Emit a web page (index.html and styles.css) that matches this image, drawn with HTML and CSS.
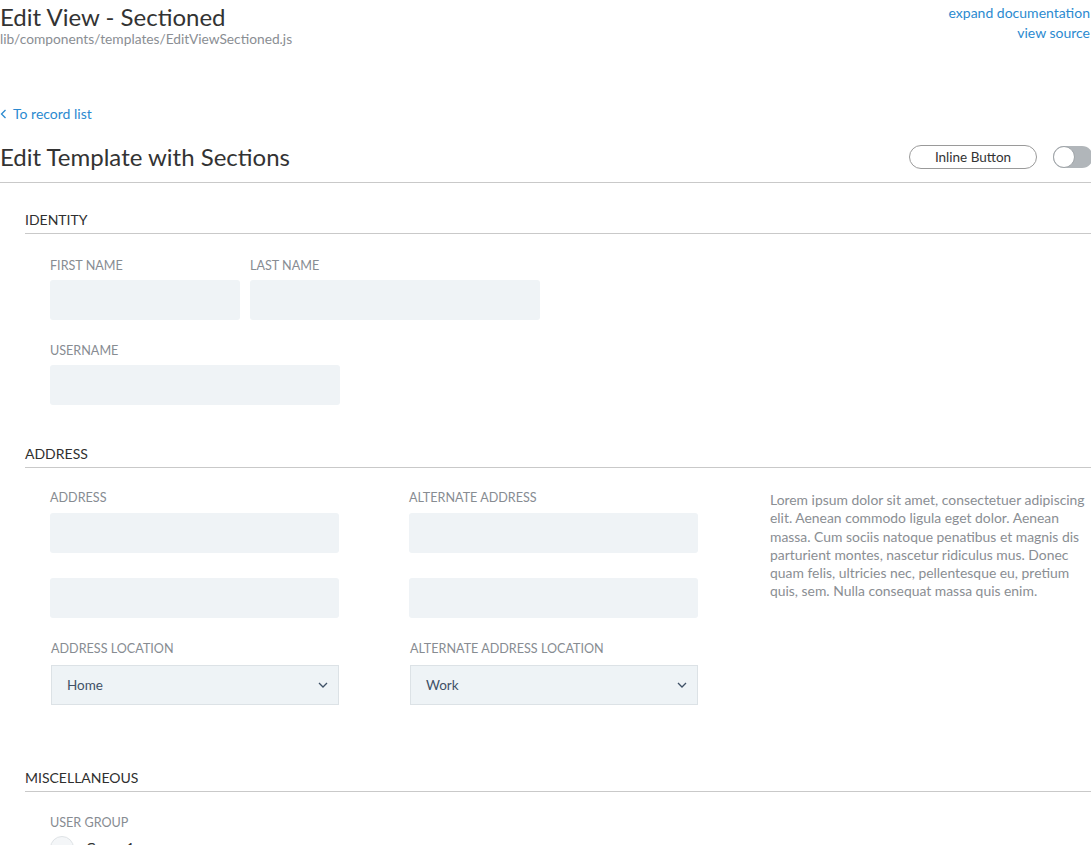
FILE: index.html
```html
<!DOCTYPE html>
<html lang="en">
<head>
<meta charset="utf-8">
<title>Edit View - Sectioned</title>
<link rel="stylesheet" href="styles.css">
</head>
<body>
<header class="doc-header">
  <div class="doc-title-block">
    <h1 class="doc-title">Edit View - Sectioned</h1>
    <div class="doc-path">lib/components/templates/EditViewSectioned.js</div>
  </div>
  <div class="doc-links">
    <a class="link" href="#">expand documentation</a>
    <a class="link" href="#">view source</a>
  </div>
</header>

<a class="back-link" href="#"><svg class="back-icon" width="7" height="10" viewBox="0 0 7 10"><path d="M5.5 1 L1.5 5 L5.5 9" fill="none" stroke="currentColor" stroke-width="1.3"/></svg>To record list</a>

<div class="page-header">
  <h2 class="page-title">Edit Template with Sections</h2>
  <div class="page-actions">
    <button class="pill-button">Inline Button</button>
    <span class="toggle"><span class="toggle-knob"></span></span>
  </div>
</div>

<section class="section section-identity">
  <h3 class="section-title">IDENTITY</h3>
  <div class="section-body">
    <div class="row">
      <div class="field w190">
        <div class="label">FIRST NAME</div>
        <div class="input"></div>
      </div>
      <div class="field w290">
        <div class="label">LAST NAME</div>
        <div class="input"></div>
      </div>
    </div>
    <div class="row row-next">
      <div class="field w290">
        <div class="label">USERNAME</div>
        <div class="input"></div>
      </div>
    </div>
  </div>
</section>

<section class="section section-address">
  <h3 class="section-title">ADDRESS</h3>
  <div class="section-body address-grid">
    <div class="address-col">
      <div class="label">ADDRESS</div>
      <div class="input"></div>
      <div class="input input-second"></div>
      <div class="label label-loc">ADDRESS LOCATION</div>
      <div class="select"><span>Home</span><svg class="chev" width="10" height="6" viewBox="0 0 10 6"><path d="M1 1 L5 5 L9 1" fill="none" stroke="#3f5166" stroke-width="1.3"/></svg></div>
    </div>
    <div class="address-col">
      <div class="label">ALTERNATE ADDRESS</div>
      <div class="input"></div>
      <div class="input input-second"></div>
      <div class="label label-loc">ALTERNATE ADDRESS LOCATION</div>
      <div class="select"><span>Work</span><svg class="chev" width="10" height="6" viewBox="0 0 10 6"><path d="M1 1 L5 5 L9 1" fill="none" stroke="#3f5166" stroke-width="1.3"/></svg></div>
    </div>
    <p class="lorem">Lorem ipsum dolor sit amet, consectetuer adipiscing elit. Aenean commodo ligula eget dolor. Aenean massa. Cum sociis natoque penatibus et magnis dis parturient montes, nascetur ridiculus mus. Donec quam felis, ultricies nec, pellentesque eu, pretium quis, sem. Nulla consequat massa quis enim.</p>
  </div>
</section>

<section class="section section-misc">
  <h3 class="section-title">MISCELLANEOUS</h3>
  <div class="section-body">
    <div class="label">USER GROUP</div>
    <label class="radio-row"><span class="radio"></span><span class="radio-text">Group 1</span></label>
  </div>
</section>
</body>
</html>
```

FILE: styles.css
```css
* { box-sizing: border-box; }
html, body { margin: 0; padding: 0; }
body {
  width: 1091px;
  overflow: hidden;
  font-family: Lato, "Open Sans", "Liberation Sans", sans-serif;
  color: #333;
  background: #fff;
}
a { text-decoration: none; }
.link { color: #2b8ad0; font-size: 14px; line-height: 20px; }

.doc-header {
  display: flex;
  justify-content: space-between;
  align-items: flex-start;
}
.doc-title {
  margin: 3px 0 0 0;
  font-size: 24px;
  font-weight: 400;
  line-height: 28px;
  color: #333;
}
.doc-path {
  font-size: 13.75px;
  line-height: 16px;
  color: #8a8e93;
}
.doc-links {
  display: flex;
  flex-direction: column;
  align-items: flex-end;
  padding-top: 3px;
  padding-right: 1px;
}

.back-link {
  display: flex;
  align-items: center;
  gap: 6px;
  margin-top: 59px;
  width: max-content;
  font-size: 14px;
  line-height: 16px;
  color: #2b8ad0;
}
.back-icon { display: block; }

.page-header {
  display: flex;
  justify-content: space-between;
  align-items: center;
  margin-top: 21px;
  padding-bottom: 11px;
  border-bottom: 1px solid #c9c9c9;
}
.page-title {
  margin: 0;
  font-size: 24px;
  font-weight: 400;
  line-height: 28px;
  color: #333;
}
.page-actions {
  display: flex;
  align-items: center;
  gap: 16px;
}
.pill-button {
  width: 128px;
  height: 24px;
  border: 1px solid #9a9a9a;
  border-radius: 12px;
  background: #fff;
  font-family: inherit;
  font-size: 13.5px;
  color: #333;
  padding: 0;
}
.toggle {
  position: relative;
  display: block;
  width: 40px;
  height: 22px;
  margin-right: -2px;
  border-radius: 11px;
  background: #b1b6ba;
}
.toggle-knob {
  position: absolute;
  left: 0;
  top: 0;
  width: 22px;
  height: 22px;
  border-radius: 50%;
  background: #fff;
  border: 1px solid #9ea3a7;
}

.section { padding-left: 25px; }
.section-identity { margin-top: 29px; }
.section-address { margin-top: 41px; }
.section-misc { margin-top: 65px; }
.section-title {
  margin: 0;
  font-size: 14px;
  font-weight: 400;
  line-height: 16px;
  color: #2f2f2f;
  padding-bottom: 5px;
  border-bottom: 1px solid #c9c9c9;
}
.section-body {
  padding-left: 25px;
  padding-top: 25px;
}
.row { display: flex; gap: 10px; }
.row-next { margin-top: 24px; }
.w190 { width: 190px; }
.w290 { width: 290px; }
.label {
  font-size: 12.6px;
  line-height: 14px;
  color: #878c92;
  margin-bottom: 7px;
}
.input {
  height: 40px;
  border-radius: 3px;
  background: #eff3f6;
}

.address-grid {
  display: flex;
  align-items: flex-start;
}
.section-address .section-body { padding-top: 23px; }
.section-address .label { margin-bottom: 8px; }
.address-col {
  width: 290px;
  margin-right: 70px;
}
.input-second { margin-top: 25px; }
.section-address .label-loc { margin-top: 24px; margin-left: 1px; margin-bottom: 9px; }
.select {
  display: flex;
  justify-content: space-between;
  align-items: center;
  width: 288px;
  height: 40px;
  margin-left: 1px;
  padding: 0 10px 0 15px;
  background: #eef3f6;
  border: 1px solid #dce2e6;
  font-size: 13.5px;
  color: #3f5166;
}
.chev { display: block; }
.lorem {
  margin: 0 0 0 2px;
  padding-top: 0;
  width: 325px;
  flex: none;
  font-size: 13.9px;
  line-height: 18.3px;
  color: #8a8e93;
}

.section-misc .section-body { padding-top: 24px; }
.section-misc .label { margin-bottom: 6px; }
.radio-row {
  display: flex;
  align-items: center;
  gap: 12px;
  font-size: 13.5px;
  color: #333;
}
.radio {
  display: block;
  width: 24px;
  height: 24px;
  border-radius: 50%;
  border: 1px solid #dfe3e6;
  background: #f4f6f8;
}
```
